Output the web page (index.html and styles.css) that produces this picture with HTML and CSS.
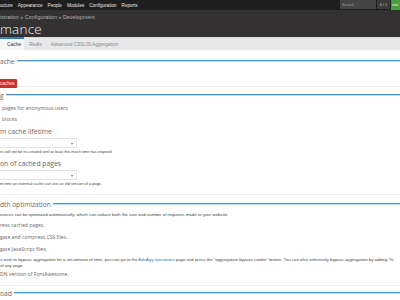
FILE: index.html
```html
<!DOCTYPE html>
<html>
<head>
<meta charset="utf-8">
<link rel="stylesheet" href="styles.css">
</head>
<body>
<div class="toolbar">
  <nav class="menu">
    <span>ucture</span><span>Appearance</span><span>People</span><span>Modules</span><span>Configuration</span><span>Reports</span>
  </nav>
  <div class="tools">
    <span class="search">Search</span>
    <span class="count">0 / 1</span>
    <span class="go">sea</span>
  </div>
</div>
<header class="header">
  <div class="crumbs">istration » Configuration » Development</div>
  <h1 class="title">mance</h1>
</header>
<div class="tabs">
  <span class="tab active">Cache</span>
  <span class="tab">Redis</span>
  <span class="tab">Advanced CSS/JS Aggregation</span>
</div>
<main class="content">
  <div class="legend l1"><span>ache</span><i class="rule"></i></div>
  <div class="btnrow"><span class="btn">caches</span></div>
  <div class="sep s1"></div>

  <div class="legend l2"><span>g</span><i class="rule"></i></div>
  <div class="label">pages for anonymous users</div>
  <div class="label">blocks</div>
  <div class="heading h1">m cache lifetime</div>
  <div class="select"><span class="arrow">▾</span></div>
  <div class="desc">es will not be re-created until at least this much time has elapsed.</div>
  <div class="heading h2">on of cached pages</div>
  <div class="select"><span class="arrow">▾</span></div>
  <div class="desc">m time an external cache can use an old version of a page.</div>
  <div class="sep s2"></div>

  <div class="legend l3"><span>dth optimization</span><i class="rule"></i></div>
  <div class="desc d3">ources can be optimized automatically, which can reduce both the size and number of requests made to your website.</div>
  <div class="label l12">ress cached pages.</div>
  <div class="label l12">gate and compress CSS files.</div>
  <div class="label l12">gate JavaScript files.</div>
  <div class="desc d4">u wish to bypass aggregation for a set amount of time, you can go to the <a class="link">AdvAgg operations</a> page and press the "aggregation bypass cookie" button. You can also selectively bypass aggregation by adding ?a<br>of any page.</div>
  <div class="label l5">DN version of FontAwesome.</div>
  <div class="sep s3"></div>

  <div class="legend l4"><span>oad</span><i class="rule"></i></div>
</main>
</body>
</html>
```
FILE: styles.css
```css
html, body {
  margin: 0;
  padding: 0;
  background: #fff;
  overflow: hidden;
}
body {
  width: 400px;
  height: 300px;
  font-family: "Open Sans", "Liberation Sans", sans-serif;
}
.toolbar {
  height: 10px;
  background: #1e1e1e;
  display: flex;
  justify-content: space-between;
  align-items: stretch;
}
.menu {
  display: flex;
  gap: 5px;
  align-items: center;
  font-size: 4.6px;
  color: #e6e6e6;
  font-family: "Liberation Sans", sans-serif;
}
.tools {
  display: flex;
  align-items: stretch;
  gap: 1px;
  font-family: "Liberation Sans", sans-serif;
  font-size: 3.8px;
}
.search {
  width: 34px;
  background: #444;
  color: #999;
  padding-left: 2px;
  display: flex;
  align-items: center;
  height: 9px;
}
.count {
  width: 13px;
  background: #3a3a3a;
  color: #ccc;
  display: flex;
  align-items: center;
  justify-content: center;
  height: 9px;
}
.go {
  width: 8px;
  background: #4c9b3f;
  color: #e8ffe0;
  display: flex;
  align-items: center;
  padding-left: 1px;
  overflow: hidden;
  height: 10px;
}
.header {
  background: #333132;
  height: 27px;
  padding-top: 1px;
}
.crumbs {
  font-family: "Liberation Sans", sans-serif;
  font-size: 5.4px;
  color: #b0b0b0;
  line-height: 8px;
  margin-top: 2px;
}
.title {
  margin: 1px 0 0 0;
  font-weight: 300;
  font-size: 13.5px;
  line-height: 14px;
  color: #f4f4f4;
  letter-spacing: 0.2px;
}
.tabs {
  height: 12px;
  background: #e8e8e9;
  display: flex;
  align-items: stretch;
  font-family: "Liberation Sans", sans-serif;
  font-size: 4.9px;
  border-top: 1px solid #d9d9d9;
  margin-top: -1px;
}
.tab {
  display: flex;
  align-items: center;
  padding: 0 4px 0 5px;
  color: #888;
}
.tab.active {
  background: #f6f6f6;
  color: #333;
  padding: 0 3px 0 7px;
  border-top: 2px solid #3a7cc0;
  margin-top: -1px;
}
.content {
  color: #595959;
}
.legend {
  display: flex;
  align-items: center;
  height: 12px;
  font-size: 6.6px;
  color: #666;
  font-weight: 400;
}
.legend span {
  white-space: nowrap;
}
.rule {
  flex: 1;
  height: 0;
  border-top: 1.5px solid #4b92cc;
  box-shadow: 0 1px 0 #c9def0;
  margin-left: 2px;
  margin-top: -1px;
}
.l1 { margin-top: 5px; }
.l2 { margin-top: 2px; }
.l3 { margin-top: 3px; }
.l4 { margin-top: 1px; }
.btnrow {
  margin-top: 1px;
  height: 9px;
}
.btn {
  display: inline-flex;
  align-items: center;
  height: 9px;
  width: 17px;
  background: #c9302c;
  color: #fbe9e9;
  font-size: 4.6px;
  font-family: "Liberation Sans", sans-serif;
  border-radius: 0 1px 1px 0;
}
.sep {
  border-top: 1px solid #ececec;
}
.s1 { margin-top: 9px; }
.s2 { margin-top: 7px; }
.s3 { margin-top: 6px; }
.label {
  font-size: 5.1px;
  line-height: 11px;
  color: #666;
  padding-left: 2px;
}
.legend + .label { margin-top: 2px; }
.l12 {
  line-height: 12px;
  padding-left: 0;
}
.d3 + .l12 { margin-top: 1px; }
.l5 {
  line-height: 10px;
  padding-left: 0;
}
.heading {
  font-size: 6.8px;
  line-height: 12px;
  color: #666;
  font-weight: 400;
}
.h1 { margin-top: 1px; }
.h2 { margin-top: 3px; }
.select {
  width: 77px;
  border: 1px solid #e2e2e2;
  border-left: none;
  box-sizing: border-box;
  height: 10px;
  position: relative;
  background: #fff;
}
.arrow {
  position: absolute;
  right: 3px;
  top: 1px;
  font-size: 4px;
  line-height: 7px;
  color: #777;
}
.desc {
  font-family: "Liberation Sans", sans-serif;
  font-size: 3.9px;
  line-height: 6px;
  color: #444;
  white-space: nowrap;
}
.select + .desc { margin-top: 1px; }
.d3 {
  margin-top: 2px;
  font-size: 4.4px;
}
.d4 {
  margin-top: 2px;
  font-size: 4.3px;
}
.link {
  color: #1f7ac4;
}
```
